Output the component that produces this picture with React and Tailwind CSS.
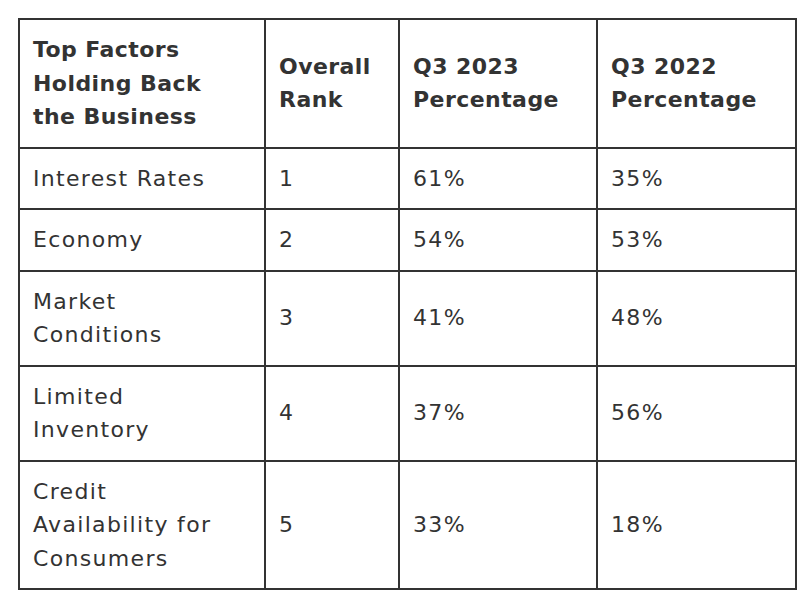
const rows = [
  { factor: ['Interest Rates'], rank: '1', q3_2023: '61%', q3_2022: '35%' },
  { factor: ['Economy'], rank: '2', q3_2023: '54%', q3_2022: '53%' },
  { factor: ['Market', 'Conditions'], rank: '3', q3_2023: '41%', q3_2022: '48%' },
  { factor: ['Limited', 'Inventory'], rank: '4', q3_2023: '37%', q3_2022: '56%' },
  { factor: ['Credit', 'Availability for', 'Consumers'], rank: '5', q3_2023: '33%', q3_2022: '18%' },
];

function Lines({ lines }) {
  return lines.map((line, i) => (
    <span key={i}>
      {line}
      {i < lines.length - 1 && <br />}
    </span>
  ));
}

const cell = 'border-2 border-[#333333] px-[13px] py-[13px] align-middle text-left';

export default function App() {
  return (
    <div
      className="min-h-screen bg-white pl-[18px] pt-[18px] text-[#333333]"
      style={{ fontFamily: '"DejaVu Sans", "Liberation Sans", sans-serif' }}
    >
      <table className="w-[779px] table-fixed border-collapse text-[22px] leading-[33.5px]">
        <colgroup>
          <col className="w-[246px]" />
          <col className="w-[134px]" />
          <col className="w-[198px]" />
          <col className="w-[199px]" />
        </colgroup>
        <thead>
          <tr className="font-bold tracking-[0.02em]">
            <th className={cell}>
              <Lines lines={['Top Factors', 'Holding Back', 'the Business']} />
            </th>
            <th className={cell}>
              <Lines lines={['Overall', 'Rank']} />
            </th>
            <th className={cell}>
              <Lines lines={['Q3 2023', 'Percentage']} />
            </th>
            <th className={cell}>
              <Lines lines={['Q3 2022', 'Percentage']} />
            </th>
          </tr>
        </thead>
        <tbody className="tracking-[0.06em]">
          {rows.map((r) => (
            <tr key={r.rank}>
              <td className={cell}>
                <Lines lines={r.factor} />
              </td>
              <td className={cell}>{r.rank}</td>
              <td className={cell}>{r.q3_2023}</td>
              <td className={cell}>{r.q3_2022}</td>
            </tr>
          ))}
        </tbody>
      </table>
    </div>
  );
}
